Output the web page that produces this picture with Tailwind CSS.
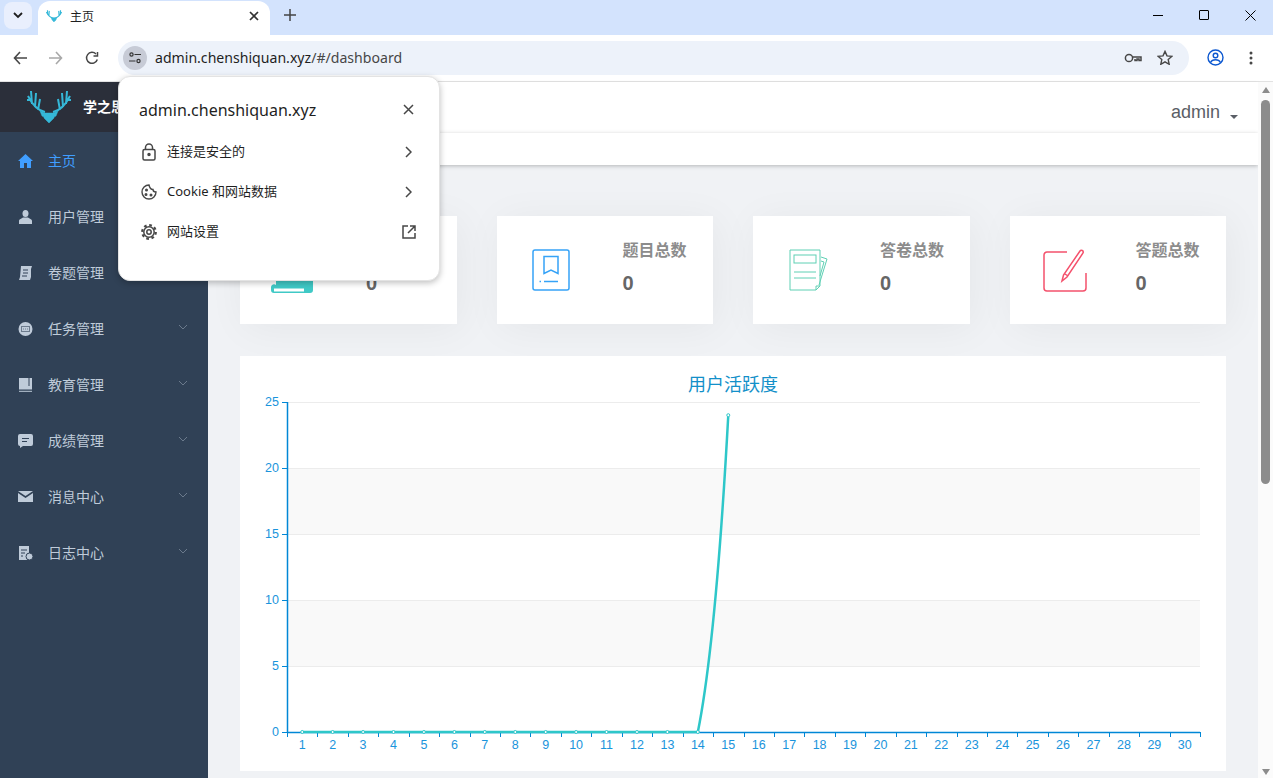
<!DOCTYPE html>
<html lang="en">
<head>
  <meta charset="UTF-8" />
  <title>主页</title>
  <script src="https://cdn.jsdelivr.net/npm/@tailwindcss/browser@4"></script>
</head>
<body class="h-[778px] w-[1273px] overflow-hidden bg-white font-['Liberation_Sans','Noto_Sans_CJK_SC',sans-serif]">

  <!-- tab strip -->
  <div class="flex h-[35px] items-start bg-[#d3e3fd]">
    <div class="ml-1 mt-[2px] flex h-[27px] w-[28px] items-center justify-center rounded-lg bg-[#e9effd]">
      <svg width="10" height="7" viewBox="0 0 10 7" fill="none" stroke="#1f1f1f" stroke-width="1.8"><path d="M1 1l4 4 4-4"/></svg>
    </div>
    <div class="ml-[6px] mt-[1px] flex h-[34px] w-[232px] items-center rounded-t-xl bg-white pb-[5px] pl-[8px]">
      <svg width="16" height="16" viewBox="0 0 44 34" fill="#35b8d8" stroke="#35b8d8"><path d="M18 22Q8 20 1 6M5 14L4 1M8 17L9 3M26 22Q36 20 43 6M39 14L40 1M36 17L35 3" fill="none" stroke-width="3"/><path d="M15 22h14l-2 6-5 5-5-5z" stroke-width="2"/></svg>
      <span class="ml-[8px] flex-1 font-['Noto_Sans_CJK_SC'] text-xs text-[#1f1f1f]">主页</span>
      <svg class="mr-[11px]" width="10" height="10" viewBox="0 0 10 10" stroke="#333" stroke-width="1.7"><path d="M1 1l8 8M9 1l-8 8"/></svg>
    </div>
    <svg class="ml-[14px] mt-[9px]" width="12" height="12" viewBox="0 0 12 12" stroke="#444" stroke-width="1.5"><path d="M6 0v12M0 6h12"/></svg>
    <div class="ml-auto flex items-center">
      <div class="flex h-[30px] w-[46px] items-center justify-center"><div class="h-px w-[10px] bg-black"></div></div>
      <div class="flex h-[30px] w-[46px] items-center justify-center"><div class="h-[10px] w-[10px] rounded-[1px] border border-black"></div></div>
      <div class="flex h-[30px] w-[46px] items-center justify-center">
        <svg width="11" height="11" viewBox="0 0 11 11" stroke="#000"><path d="M.5.5l10 10M10.500.5l-10 10"/></svg>
      </div>
    </div>
  </div>

  <!-- toolbar -->
  <div class="flex h-[47px] items-center border-b border-[#e2e2e2] bg-white pb-[1px]">
    <svg class="ml-[13px]" width="15" height="14" viewBox="0 0 15 14" fill="none" stroke="#474747" stroke-width="1.6"><path d="M14 7H2M7 1L1.500 7 7 13"/></svg>
    <svg class="ml-[20px]" width="15" height="14" viewBox="0 0 15 14" fill="none" stroke="#a8a8a8" stroke-width="1.6"><path d="M1 7h12M8 1l5.500 6L8 13"/></svg>
    <svg class="ml-[22px]" width="14" height="14" viewBox="0 0 14 14" fill="none" stroke="#474747" stroke-width="1.5"><path d="M12.300 8.500A5.500 5.500 0 1 1 11 3"/><path d="M12.500 1v4h-4" /></svg>
    <div class="ml-[19px] flex h-[34px] w-[1071px] items-center rounded-full bg-[#edf2fa] pl-[5px]">
      <div class="flex h-6 w-6 items-center justify-center rounded-full bg-[#c7cbd6]">
        <svg width="14" height="14" viewBox="0 0 14 14" fill="none" stroke="#333" stroke-width="1.2"><circle cx="3.500" cy="3.500" r="1.600"/><path d="M6.500 3.500H13M1 10h6.500"/><circle cx="10.500" cy="10" r="1.600"/></svg>
      </div>
      <span class="ml-[8px] flex-1 font-['Noto_Sans'] text-[14.1px] text-[#1f1f1f]">admin.chenshiquan.xyz<span class="text-[#474747]">/#/dashboard</span></span>
      <svg width="18" height="10" viewBox="0 0 18 10" fill="none" stroke="#474747" stroke-width="1.5"><circle cx="5" cy="5" r="3.600"/><path d="M8.600 4H17v3.500h-2V6h-2v1.500h-2V6"/></svg>
      <svg class="ml-[15px] mr-[16px]" width="16" height="15" viewBox="0 0 16 15" fill="none" stroke="#474747" stroke-width="1.4"><path d="M8 1.400l2 4.500 4.800.5-3.600 3.200 1 4.700L8 11.900l-4.200 2.400 1-4.700L1.200 6.400 6 5.900z"/></svg>
    </div>
    <svg class="ml-[18px]" width="17" height="17" viewBox="0 0 17 17" fill="none" stroke="#0b57d0" stroke-width="1.4"><circle cx="8.500" cy="8.500" r="7.500"/><circle cx="8.500" cy="6.500" r="2.300"/><path d="M3.500 13.500c1-2 3-2.800 5-2.800s4 .8 5 2.800"/></svg>
    <svg class="ml-[25px]" width="4" height="14" viewBox="0 0 4 14" fill="#474747"><circle cx="2" cy="2" r="1.500"/><circle cx="2" cy="7" r="1.500"/><circle cx="2" cy="12" r="1.500"/></svg>
  </div>

  <!-- page -->
  <div class="relative flex h-[696px]">
    <!-- sidebar -->
    <aside class="w-[208px] shrink-0 bg-[#304156]">
      <div class="flex h-[50px] items-center bg-[#2b2f3a] pl-[27px]">
        <svg width="44" height="34" viewBox="0 0 44 34" fill="#35b8d8" stroke="#35b8d8"><path d="M18 22Q8 20 1 6M5 14L4 1M8 17L9 3M11 20L13 9M3 10L0 10" fill="none" stroke-width="2"/><path d="M26 22Q36 20 43 6M39 14L40 1M36 17L35 3M33 20L31 9M41 10L44 10" fill="none" stroke-width="2"/><path d="M13 21l5 2h8l5-2-2 5-2 1v1l-5 5-5-5v-1l-2-1z" stroke-width=".5"/></svg>
        <span class="ml-3 mt-[1px] text-[14px] font-bold text-white">学之思</span>
      </div>
      <nav class="text-[14px] text-[#bfcbd9]">
        <div class="flex h-14 items-center pl-[18px] pt-[2px] text-[#409eff]">
          <svg class="mr-[15px]" width="15" height="14" viewBox="0 0 15 14" fill="#409eff"><path d="M7.500 0L0 7h2v7h4V9h3v5h4V7h2z"/></svg>主页
        </div>
        <div class="flex h-14 items-center pl-[18px] pt-[2px]">
          <svg class="mr-[15px]" width="15" height="14" viewBox="0 0 15 14" fill="#bfcbd9"><ellipse cx="7.500" cy="3.500" rx="3" ry="3.500"/><path d="M1 14v-3c0-2 3-2.500 4-3.500h5c1 1 4 1.500 4 3.500v3z"/></svg>用户管理
        </div>
        <div class="flex h-14 items-center pl-[18px] pt-[2px]">
          <svg class="mr-[15px]" width="15" height="14" viewBox="0 0 15 14"><path d="M3 0h11l-1 3v8l-1 3H1l1-3z" fill="#bfcbd9"/><path d="M5 4h5M5 7h5M4 10h5" stroke="#304156"/></svg>卷题管理
        </div>
        <div class="flex h-14 items-center pl-[18px] pt-[2px]">
          <svg class="mr-[15px]" width="15" height="14" viewBox="0 0 15 14"><circle cx="7.500" cy="7" r="7" fill="#bfcbd9"/><rect x="3.500" y="4.500" width="8" height="5" fill="none" stroke="#6b7a8c"/><path d="M5 7h5" stroke="#6b7a8c" stroke-dasharray="1 1"/></svg>任务管理
          <svg class="ml-[74px] mt-[-5px]" width="10" height="6" viewBox="0 0 10 6" fill="none" stroke="#6b7a8c"><path d="M1 1l4 4 4-4"/></svg>
        </div>
        <div class="flex h-14 items-center pl-[18px] pt-[2px]">
          <svg class="mr-[15px]" width="15" height="14" viewBox="0 0 15 14"><path d="M1 0h13v11.500H1z" fill="#bfcbd9"/><path d="M11 0v8" stroke="#304156"/><path d="M1 13.300h13" stroke="#bfcbd9"/></svg>教育管理
          <svg class="ml-[74px] mt-[-5px]" width="10" height="6" viewBox="0 0 10 6" fill="none" stroke="#6b7a8c"><path d="M1 1l4 4 4-4"/></svg>
        </div>
        <div class="flex h-14 items-center pl-[18px] pt-[2px]">
          <svg class="mr-[15px]" width="15" height="14" viewBox="0 0 15 14"><path d="M2 0h11a2 2 0 0 1 2 2v8a2 2 0 0 1-2 2H5l-3 2v-2a2 2 0 0 1-2-2V2a2 2 0 0 1 2-2z" fill="#bfcbd9"/><path d="M4 4.500h7M4 7.500h5" stroke="#304156"/></svg>成绩管理
          <svg class="ml-[74px] mt-[-5px]" width="10" height="6" viewBox="0 0 10 6" fill="none" stroke="#6b7a8c"><path d="M1 1l4 4 4-4"/></svg>
        </div>
        <div class="flex h-14 items-center pl-[18px] pt-[2px]">
          <svg class="mr-[15px]" width="15" height="14" viewBox="0 0 15 14" fill="#bfcbd9"><path d="M0 1l7.500 5L15 1zM0 3v9h15V3L7.500 8z"/></svg>消息中心
          <svg class="ml-[74px] mt-[-5px]" width="10" height="6" viewBox="0 0 10 6" fill="none" stroke="#6b7a8c"><path d="M1 1l4 4 4-4"/></svg>
        </div>
        <div class="flex h-14 items-center pl-[18px] pt-[2px]">
          <svg class="mr-[15px]" width="15" height="14" viewBox="0 0 15 14"><path d="M1 0h10v14H1z" fill="#bfcbd9"/><path d="M3 4h6M3 7h4M3 10h2" stroke="#304156"/><circle cx="11.500" cy="10.500" r="3.500" fill="#bfcbd9" stroke="#304156"/></svg>日志中心
          <svg class="ml-[74px] mt-[-5px]" width="10" height="6" viewBox="0 0 10 6" fill="none" stroke="#6b7a8c"><path d="M1 1l4 4 4-4"/></svg>
        </div>
      </nav>
    </aside>

    <!-- main -->
    <main class="flex w-[1050px] shrink-0 flex-col bg-[#f0f2f5]">
      <div class="flex h-[51px] items-center justify-end bg-white pr-[20px] pt-[8px] shadow-[0_1px_4px_rgba(0,21,41,0.08)]">
        <span class="text-lg text-[#5a5e66]">admin</span>
        <div class="ml-[10px] mt-[10px] h-0 w-0 border-x-[4px] border-t-[4px] border-x-transparent border-t-[#5a5e66]"></div>
      </div>
      <div class="h-[32px] bg-white shadow-[0_1px_4px_rgba(0,0,0,0.25)]"></div>

      <div class="grid grid-cols-4 gap-x-[40px] pl-[32px] pr-[32px] pt-[51px]">
        <div class="flex h-[108px] bg-white shadow-[4px_4px_40px_rgba(0,0,0,0.05)]">
          <div class="w-[126px] pl-[30px] pt-[34px]">
            <svg width="43" height="44" viewBox="0 0 43 44" fill="#40c9c6"><path d="M6 0h37v40a3 3 0 0 1-3 3H4a3 3 0 0 1-3-3v-3a3 3 0 0 1 5-2z"/><path d="M4 38.500h30v3H4z" fill="#fff"/></svg>
          </div>
          <div class="pt-[25px]">
            <p class="text-base font-bold leading-5 text-[#8c8c8c]">用户总数</p>
            <p class="mt-[12px] text-xl font-bold leading-5 text-[#666]">0</p>
          </div>
        </div>
        <div class="flex h-[108px] bg-white shadow-[4px_4px_40px_rgba(0,0,0,0.05)]">
          <div class="w-[126px] pl-[35px] pt-[33px]">
            <svg width="38" height="42" viewBox="0 0 38 42" fill="none" stroke="#36a3f7" stroke-width="1.500"><rect x="1" y="1" width="36" height="40" rx="2"/><path d="M12 7.500h14v17l-7-3.500-7 3.500zM12 32.500h14"/><path d="M7.500 32.500h1.500"/></svg>
          </div>
          <div class="pt-[25px]">
            <p class="text-base font-bold leading-5 text-[#8c8c8c]">题目总数</p>
            <p class="mt-[12px] text-xl font-bold leading-5 text-[#666]">0</p>
          </div>
        </div>
        <div class="flex h-[108px] bg-white shadow-[4px_4px_40px_rgba(0,0,0,0.05)]">
          <div class="w-[127px] pl-[36px] pt-[33px]">
            <svg width="40" height="42" viewBox="0 0 40 42" fill="none" stroke="#5fd0b4"><path d="M1 1h30v36l-4 4H1zM27 41v-4h4"/><rect x="5" y="6" width="22" height="8" /><path d="M5 23h22M5 29h22M32 8l6 2-8 26"/><path d="M32 12l3 1-4 14"/></svg>
          </div>
          <div class="pt-[25px]">
            <p class="text-base font-bold leading-5 text-[#8c8c8c]">答卷总数</p>
            <p class="mt-[12px] text-xl font-bold leading-5 text-[#666]">0</p>
          </div>
        </div>
        <div class="flex h-[108px] bg-white shadow-[4px_4px_40px_rgba(0,0,0,0.05)]">
          <div class="w-[126px] pl-[33px] pt-[33px]">
            <svg width="44" height="44" viewBox="0 0 44 44" fill="none" stroke="#f4516c" stroke-width="1.500"><path d="M24 3H4a3 3 0 0 0-3 3v33a3 3 0 0 0 3 3h36a3 3 0 0 0 3-3V24"/><path d="M19 32l1.500-6L37 2c1-1.500 4-.5 3 2L24 28zM22 25l3 2"/></svg>
          </div>
          <div class="pt-[25px]">
            <p class="text-base font-bold leading-5 text-[#8c8c8c]">答题总数</p>
            <p class="mt-[12px] text-xl font-bold leading-5 text-[#666]">0</p>
          </div>
        </div>
      </div>

      <!-- chart -->
      <div class="ml-[32px] mt-[32px] h-[415px] w-[986px] bg-white">
        <svg id="chart" width="986" height="415" viewBox="240 356 986 415"></svg>
      </div>
    </main>

    <!-- page scrollbar -->
    <div class="flex w-[15px] shrink-0 flex-col items-center bg-[#fbfbfb]">
      <div class="mt-[5px] h-0 w-0 border-x-[4px] border-b-[6px] border-x-transparent border-b-[#8c8c8c]"></div>
      <div class="mt-[7px] h-[384px] w-[9px] rounded-full bg-[#8c8c8c]"></div>
      <div class="mt-auto mb-[3px] h-0 w-0 border-x-[4px] border-t-[6px] border-x-transparent border-t-[#8c8c8c]"></div>
    </div>

    <!-- site info popup -->
    <div class="absolute left-[118px] top-[-6px] h-[205px] w-[322px] rounded-xl border border-[#e3e3e3] bg-white font-['Noto_Sans','Noto_Sans_CJK_SC',sans-serif] text-[#1f1f1f] shadow-[0_2px_6px_rgba(0,0,0,0.25)]">
      <div class="flex h-[55px] items-center pl-[20px] pr-[25px] pt-[10px]">
        <span class="flex-1 text-[16px]">admin.chenshiquan.xyz</span>
        <svg width="11" height="11" viewBox="0 0 11 11" stroke="#474747" stroke-width="1.500"><path d="M1 1l9 9M10 1l-9 9"/></svg>
      </div>
      <div class="text-[13px]">
        <div class="flex h-[40px] items-center pl-[23px] pr-[27px]">
          <svg class="mr-[11px]" width="14" height="18" viewBox="0 0 14 18" fill="none" stroke="#474747" stroke-width="1.500"><rect x="1" y="6.500" width="12" height="10.500" rx="1.500"/><path d="M3.500 6.500V4.500a3.500 3.500 0 0 1 7 0v2"/><circle cx="7" cy="11.500" r="1" fill="#474747"/></svg>
          <span class="flex-1">连接是安全的</span>
          <svg width="7" height="12" viewBox="0 0 7 12" fill="none" stroke="#474747" stroke-width="1.500"><path d="M1 1l5 5-5 5"/></svg>
        </div>
        <div class="flex h-[40px] items-center pl-[22px] pr-[27px]">
          <svg class="mr-[10px]" width="16" height="16" viewBox="0 0 16 16" fill="none" stroke="#474747" stroke-width="1.400"><path d="M8 1a7 7 0 1 0 7 7c-2 0-3-1-3-2.500C10 5.500 8.500 3.500 8 1z"/><circle cx="5.500" cy="6" r=".8" fill="#474747"/><circle cx="5" cy="10.500" r=".8" fill="#474747"/><circle cx="10" cy="11" r=".8" fill="#474747"/></svg>
          <span class="flex-1">Cookie 和网站数据</span>
          <svg width="7" height="12" viewBox="0 0 7 12" fill="none" stroke="#474747" stroke-width="1.500"><path d="M1 1l5 5-5 5"/></svg>
        </div>
        <div class="flex h-[40px] items-center pl-[22px] pr-[23px]">
          <svg class="mr-[10px]" width="16" height="16" viewBox="0 0 16 16" fill="none" stroke="#474747"><circle cx="8" cy="8" r="2.200" stroke-width="1.500"/><circle cx="8" cy="8" r="5.200" stroke-width="1.500"/><circle cx="8" cy="8" r="6.800" stroke-width="2.200" stroke-dasharray="2.700 2.640"/></svg>
          <span class="flex-1">网站设置</span>
          <svg width="14" height="14" viewBox="0 0 14 14" fill="none" stroke="#474747" stroke-width="1.500"><path d="M6 1H1v12h12V8M8 1h5v5M13 1L6 8"/></svg>
        </div>
      </div>
    </div>
  </div>

  <script>
    const svgNS = "http://www.w3.org/2000/svg";
    const chart = document.getElementById("chart");
    const blue = "#0087d6";
    const textBlue = "#1a94dc";
    const left = 287, right = 1200, top0 = 402, bottom = 732;
    const stepX = (right - left) / 30, stepY = (bottom - top0) / 25;

    function add(tag, attrs, text) {
      const el = document.createElementNS(svgNS, tag);
      Object.keys(attrs).forEach(k => el.setAttribute(k, attrs[k]));
      if (text !== undefined) el.textContent = text;
      chart.appendChild(el);
      return el;
    }

    add("text", { x: 733, y: 391, "text-anchor": "middle", "font-size": 18, fill: "#1390c9" }, "用户活跃度");

    // striped bands and split lines
    [[468, "#f9f9f9"], [600, "#f9f9f9"]].forEach(b => add("rect", { x: left, y: b[0], width: right - left, height: 66, fill: b[1] }));
    for (let v = 0; v <= 25; v += 5) {
      const y = Math.round(bottom - v * stepY) + 0.5;
      if (v > 0) add("line", { x1: left, x2: right, y1: y, y2: y, stroke: "#ececec" });
      add("line", { x1: left - 5, x2: left, y1: y, y2: y, stroke: blue });
      add("text", { x: left - 8, y: y + 3, "text-anchor": "end", "font-size": 12.5, fill: textBlue }, v);
    }
    add("line", { x1: left + 0.5, x2: left + 0.5, y1: top0, y2: bottom, stroke: blue, "stroke-width": 1.5 });
    add("line", { x1: left, x2: right, y1: bottom + 0.5, y2: bottom + 0.5, stroke: blue, "stroke-width": 1.5 });

    for (let d = 0; d <= 30; d++) {
      const x = Math.round(left + d * stepX) + 0.5;
      add("line", { x1: x, x2: x, y1: bottom, y2: bottom + 5, stroke: blue });
      if (d < 30) add("text", { x: left + (d + 0.5) * stepX, y: bottom + 17, "text-anchor": "middle", "font-size": 12.5, fill: textBlue }, d + 1);
    }

    const x14 = left + 13.5 * stepX, x15 = left + 14.5 * stepX, y24 = bottom - 24 * stepY;
    add("path", { d: `M${left + stepX / 2} ${bottom}H${x14}C${x14 + 14} ${bottom - 70} ${x15 - 6} ${y24 + 110} ${x15} ${y24}`, fill: "none", stroke: "#2ec7c9", "stroke-width": 2.5 });
    for (let d = 0; d < 15; d++) {
      const x = left + (d + 0.5) * stepX;
      add("circle", { cx: x, cy: d === 14 ? y24 : bottom, r: 1.5, fill: "#fff", stroke: "#2ec7c9" });
    }
  </script>
</body>
</html>
